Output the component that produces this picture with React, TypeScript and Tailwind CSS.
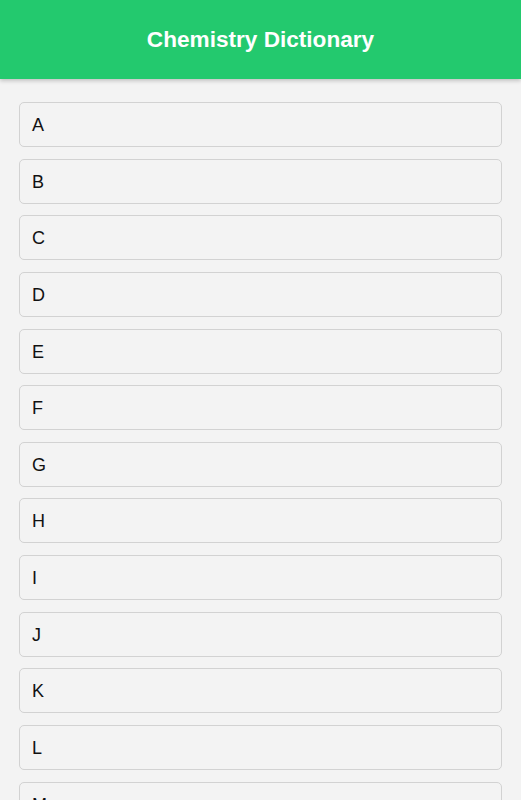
const LETTERS = 'ABCDEFGHIJKLMNOPQRSTUVWXYZ'.split('')

export default function App() {
  return (
    <div className="min-h-screen bg-[#f3f3f3] font-['Liberation_Sans',Arial,sans-serif]">
      {/* Header */}
      <header className="h-[79px] pt-px bg-[#23c96e] flex items-center justify-center shadow-[0_2px_4px_rgba(0,0,0,0.2)] relative z-10">
        <h1 className="text-[22.6px] font-bold text-white">Chemistry Dictionary</h1>
      </header>

      {/* Letter list */}
      <div className="px-[19px] pt-[23px] pb-5 flex flex-col gap-[11.64px]">
        {LETTERS.map((l) => (
          <button
            key={l}
            className="h-[45px] w-full text-left px-3 pt-[2px] border border-[#d2d2d2] rounded-[5px] bg-[#f3f3f3] text-[18px] text-[#111]"
          >
            {l}
          </button>
        ))}
      </div>
    </div>
  )
}
